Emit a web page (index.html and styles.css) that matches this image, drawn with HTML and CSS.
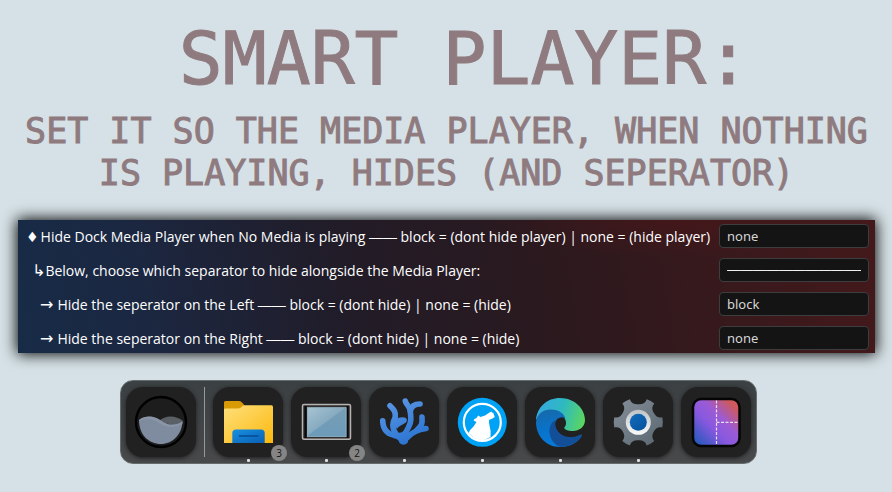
FILE: index.html
```html
<!DOCTYPE html>
<html lang="en">
<head>
<meta charset="utf-8">
<meta name="viewport" content="width=device-width, initial-scale=1">
<title>Smart Player</title>
<link rel="stylesheet" href="styles.css">
</head>
<body>
<header class="intro">
  <h1 class="title">SMART PLAYER:</h1>
  <p class="subtitle">SET IT SO THE MEDIA PLAYER, WHEN NOTHING IS PLAYING, HIDES (AND SEPERATOR)</p>
</header>

<form class="settings">
  <div class="row row-main">
    <label for="player"><span class="mark diamond">♦</span><span>Hide Dock Media Player when No Media is playing <span class="dash">——</span> block = (dont hide player) | none = (hide player)</span></label>
    <input id="player" type="text" value="none">
  </div>
  <div class="row row-note">
    <label for="note"><span class="mark">↳</span><span>Below, choose which separator to hide alongside the Media Player:</span></label>
    <input id="note" class="rule" type="text" value="——————————————">
  </div>
  <div class="row row-sub">
    <label for="left"><span class="mark">→</span><span>Hide the seperator on the Left <span class="dash">——</span> block = (dont hide) | none = (hide)</span></label>
    <input id="left" type="text" value="block">
  </div>
  <div class="row row-sub">
    <label for="right"><span class="mark">→</span><span>Hide the seperator on the Right <span class="dash">——</span> block = (dont hide) | none = (hide)</span></label>
    <input id="right" type="text" value="none">
  </div>
</form>

<nav class="dock" aria-label="Dock">
  <button class="app" type="button" aria-label="Rainmeter">
    <svg viewBox="0 0 70 70">
      <circle cx="35" cy="35" r="25" fill="#1d1d1d" stroke="#000" stroke-width="2.4"/>
      <path d="M33 34C39 28 50 28 57 34Q56 40 52 40Z" fill="#5b6066"/>
      <path d="M13 33C20 28 28 29 34 33C42 39 49 39 56.500 34.500C56 48 46 57 35 57C23 57 13 48 13 33Z" fill="#7f8b9e"/>
      <path d="M13 33C20 28 28 29 34 33C42 39 49 39 56.500 34.500L56 37C48 41 41 41 33 36C27 31 20 31 13 34Z" fill="#8e9aab" opacity=".7"/>
    </svg>
  </button>
  <span class="divider"></span>
  <button class="app running" type="button" aria-label="Files, 3 windows">
    <svg viewBox="0 0 70 70">
      <defs>
        <linearGradient id="folder" x1="0" y1="0" x2="1" y2="1"><stop offset="0" stop-color="#ffe07c"/><stop offset="1" stop-color="#fbb80d"/></linearGradient>
        <linearGradient id="tray" x1="0" y1="0" x2="1" y2="1"><stop offset="0" stop-color="#1790df"/><stop offset="1" stop-color="#0b60b5"/></linearGradient>
      </defs>
      <path d="M11 24V15.500Q11 14 12.500 14H26Q28 14 29.500 16L32 19V24Z" fill="#d89a05"/>
      <path d="M11 22.500Q11 21.500 12.500 21.500H24Q27 21.500 28.500 20L29.500 19Q30.200 18.300 32 18.300H58.500Q60 18.300 60 20V56H11Z" fill="url(#folder)"/>
      <path d="M19.300 56V46Q19.300 42.500 23 42.500H48Q51.700 42.500 51.700 46V56Z" fill="url(#tray)"/>
      <path d="M26.500 49H45" stroke="#074993" stroke-width="1.500" stroke-linecap="round"/>
    </svg>
    <span class="badge">3</span>
  </button>
  <button class="app running" type="button" aria-label="Desktop, 2 windows">
    <svg viewBox="0 0 70 70">
      <defs>
        <linearGradient id="screen" x1="0" y1="0" x2="1" y2="1"><stop offset="0" stop-color="#a8c5d2"/><stop offset="1" stop-color="#638ead"/></linearGradient>
        <linearGradient id="shade" x1="0" y1="0" x2="0" y2="1"><stop offset="0" stop-color="#789eb4"/><stop offset="1" stop-color="#6c9bba"/></linearGradient>
      </defs>
      <rect x="11.500" y="17.500" width="48" height="34.800" rx="1.500" fill="#302d2c" stroke="#b5b3b2" stroke-width="1.500"/>
      <path d="M14.500 19V51M56.500 19V51" stroke="#090909" stroke-width="2"/>
      <rect x="16" y="20.300" width="39.300" height="29.700" fill="url(#screen)"/>
      <path d="M55.300 20.300V50H16V49Z" fill="url(#shade)"/>
      <rect x="16.400" y="20.700" width="38.500" height="28.900" fill="none" stroke="#8cabbc" stroke-width=".8"/>
    </svg>
    <span class="badge">2</span>
  </button>
  <button class="app running" type="button" aria-label="Coral">
    <svg viewBox="0 0 70 70">
      <defs><linearGradient id="coral" gradientUnits="userSpaceOnUse" x1="20" y1="12" x2="40" y2="58"><stop offset="0" stop-color="#5b97e4"/><stop offset="1" stop-color="#2a74d2"/></linearGradient></defs>
      <g fill="none" stroke="url(#coral)" stroke-width="5.600" stroke-linecap="round" stroke-linejoin="round">
        <path d="M13.700 33.700C14 42 18 48 28 48.500"/>
        <path d="M21 18.700C25 22.500 26.800 25 26.300 30C24 35 22 40 27 47"/>
        <path d="M26 36C28 34 31 33 35 33.200"/>
        <path d="M36.300 14C37 18 40.500 18.500 41.300 24C41.500 29 43 33 40.500 38C38.500 42 38.500 45 33 49"/>
        <path d="M51 17C47 17 42.500 18 41.300 24"/>
        <path d="M53 30C53.500 36 53 39 48 43"/>
        <path d="M57 41.500C50 42.500 44 44 39 50"/>
      </g>
      <path d="M37.500 33.500C37 37.500 31 37 28 42L25.500 38L31 32Z" fill="url(#coral)"/>
      <path d="M23 46.500Q30 45.500 36 45L44 46L40.500 51Q39 53 38.500 56Q34.500 59.500 30.500 56Q30 52 24 51Z" fill="url(#coral)"/>
    </svg>
  </button>
  <button class="app running" type="button" aria-label="LibreWolf">
    <svg viewBox="0 0 70 70">
      <circle cx="35.300" cy="35.300" r="24.500" fill="#00a2f5"/>
      <circle cx="35.300" cy="35.300" r="18.500" fill="none" stroke="#fff" stroke-width="2.200"/>
      <path d="M26.500 33.500Q27 31.500 29.500 31L31.200 28.500L33.500 30L38 28.500L42.500 25.600L44.300 24.500L45.200 26L46 25.200L47.800 30L45.500 31.500L42.300 32.700Q41.300 35 42.500 38.500Q44.300 44 43.500 50L35 54L27 51L21.500 46Q23 42.500 26.500 39.500L29.500 35Z" fill="#fff"/>
    </svg>
  </button>
  <button class="app running" type="button" aria-label="Edge">
    <svg viewBox="0 0 70 70">
      <defs>
        <linearGradient id="edge-top" x1="0" y1=".4" x2="1" y2=".6"><stop offset="0" stop-color="#36a9e2"/><stop offset=".5" stop-color="#2eb9c0"/><stop offset="1" stop-color="#5bd660"/></linearGradient>
        <linearGradient id="edge-body" x1=".2" y1="0" x2=".5" y2="1"><stop offset="0" stop-color="#1769a9"/><stop offset=".5" stop-color="#0873cb"/><stop offset="1" stop-color="#087bd9"/></linearGradient>
      </defs>
      <path d="M11 33C12 20 22 11 35 11C50 11 60 22 60 33C60 40 54 44 48 44C43 44 39 42.500 39.300 40.500C41.500 38.500 41.500 35 40 32C36 24 21 20 11 33Z" fill="url(#edge-top)"/>
      <path d="M11 35C12 27 18 22.500 26 22.500C34 22.500 39 26.500 40.500 31.500C35 28 29 33 30 39C32 49 44 54 55 48Q58 47 56 50C51 57 43 60 35 60C21 60 11 49 11 35Z" fill="url(#edge-body)"/>
      <path d="M30.500 33C22 37 22 53 34 59.500C43 60.500 51 57 56 50Q58 46.500 54.500 48C43 54 28 47 30.500 33Z" fill="#124f98"/>
    </svg>
  </button>
  <button class="app running" type="button" aria-label="Settings">
    <svg viewBox="0 0 70 70">
      <defs>
        <linearGradient id="gear" x1="0" y1="0" x2="1" y2="1"><stop offset="0" stop-color="#858f99"/><stop offset="1" stop-color="#596670"/></linearGradient>
        <linearGradient id="hub" x1="0" y1="0" x2="0" y2="1"><stop offset="0" stop-color="#bfc2c5"/><stop offset="1" stop-color="#fafafa"/></linearGradient>
        <linearGradient id="core" x1="0" y1="0" x2="1" y2="1"><stop offset="0" stop-color="#116dbd"/><stop offset="1" stop-color="#07509a"/></linearGradient>
      </defs>
      <path d="M27 12.200C28 16 31 17.300 35.300 17.300C39.600 17.300 42.600 16 43.600 12.200Q48 13.500 51.300 16.500C48.500 20 49 23 51 26.300C53 29.800 55.500 31 59.300 30.200Q60.500 35.300 59.300 40.400C55.500 39.600 53 40.800 51 44.300C49 47.600 48.500 50.600 51.300 54.100Q48 57.100 43.600 58.400C42.600 54.600 39.600 53.300 35.300 53.300C31 53.300 28 54.600 27 58.400Q22.600 57.100 19.300 54.100C22.100 50.600 21.600 47.600 19.600 44.300C17.600 40.800 15.100 39.600 11.300 40.400Q10.100 35.300 11.300 30.200C15.100 31 17.600 29.800 19.600 26.300C21.600 23 22.100 20 19.300 16.500Q22.600 13.500 27 12.200Z" fill="url(#gear)"/>
      <circle cx="35.300" cy="35.300" r="12.500" fill="url(#hub)"/>
      <circle cx="35.300" cy="35.300" r="8.500" fill="url(#core)"/>
    </svg>
  </button>
  <button class="app" type="button" aria-label="Window layout">
    <svg viewBox="0 0 70 70">
      <defs><linearGradient id="tiles" x1="0" y1="1" x2="1" y2="0"><stop offset="0" stop-color="#1459b6"/><stop offset=".4" stop-color="#8858df"/><stop offset=".6" stop-color="#9b5bd6"/><stop offset=".85" stop-color="#cc5962"/><stop offset="1" stop-color="#d65a50"/></linearGradient></defs>
      <rect x="12" y="12" width="46.500" height="47" rx="8" fill="url(#tiles)" stroke="#050505" stroke-width="2.500"/>
      <path d="M35.500 13.500V58M35.500 35.300H57.500" stroke="#e9dcee" stroke-width="1.200" stroke-dasharray="3 1.500" fill="none"/>
    </svg>
  </button>
</nav>
</body>
</html>
```
FILE: styles.css
```css
* {
  box-sizing: border-box;
}

body {
  margin: 0;
  padding: 17px 17px 0 18px;
  background: #d5e1e6;
  font-family: "Open Sans", "Noto Sans", sans-serif;
}

.intro {
  color: #8f7b7f;
  font-family: "DejaVu Sans Mono", monospace;
  text-align: center;
  -webkit-text-stroke: 1px #8f7b7f;
}

.title {
  margin: 0 0 9px;
  padding-left: 36px;
  font-size: 73px;
  font-weight: 400;
  line-height: 84px;
}

.subtitle {
  margin: 0 0 26px;
  font-size: 35px;
  line-height: 42px;
}

.settings {
  display: flex;
  flex-direction: column;
  gap: 10px;
  padding: 4px 6px 3px 8px;
  background:
    radial-gradient(ellipse at 76% 0, rgba(100, 20, 20, 0.3), transparent 20%),
    linear-gradient(80deg, #172b47 0%, #1b2741 15%, #211c28 38%, #2b191e 62%, #38191c 82%, #44191b 100%);
  box-shadow: 0 0 14px 1px #000;
}

.row {
  display: flex;
  align-items: center;
  justify-content: space-between;
  height: 24px;
}

.row label {
  display: flex;
  align-items: baseline;
  gap: 4px;
  padding-top: 2px;
  color: #fff;
  font-size: 14px;
  line-height: 24px;
  white-space: nowrap;
}

.row-main label {
  gap: 2px;
}

.row-note label {
  gap: 0;
  padding-left: 6px;
}

.row-sub label {
  padding-left: 14px;
}

.mark {
  font-family: "DejaVu Sans", sans-serif;
  font-size: 16px;
  line-height: 16px;
}

.diamond {
  font-size: 14px;
}

.dash {
  font-family: "Liberation Sans", sans-serif;
  line-height: 16px;
}

.row input {
  width: 150px;
  height: 24px;
  padding: 0 7px 1px;
  border: 1px solid #3e3e40;
  border-radius: 4px;
  background: #141414;
  color: #d6d6d6;
  font: 13px/20px "Noto Sans", "Open Sans", sans-serif;
}

.row .rule {
  color: #f0f0f0;
  font-family: "Liberation Sans", sans-serif;
}

.dock {
  display: flex;
  gap: 8px;
  width: fit-content;
  margin: 27px auto 0;
  padding: 6px 5px;
  border: 1px solid #666b6c;
  border-radius: 13px;
  background: linear-gradient(#3b4042, #48494b);
  translate: -8px 0;
}

.app {
  position: relative;
  width: 70px;
  height: 70px;
  padding: 0;
  border: 0;
  border-radius: 17px;
  background: #212121;
  box-shadow: 0 1px 4px #1d1d1d;
}

.app svg {
  display: block;
  width: 100%;
  height: 100%;
}

.running::after {
  content: "";
  position: absolute;
  bottom: -5px;
  left: 34px;
  width: 3px;
  height: 3px;
  border-radius: 1px;
  background: #dedede;
}

.badge {
  position: absolute;
  right: -4px;
  bottom: -4px;
  width: 16px;
  border-radius: 50%;
  background: #858585;
  color: #151515;
  font: 10px/16px "Open Sans", sans-serif;
  text-align: center;
}

.divider {
  width: 1px;
  background: #96999a;
}
```
